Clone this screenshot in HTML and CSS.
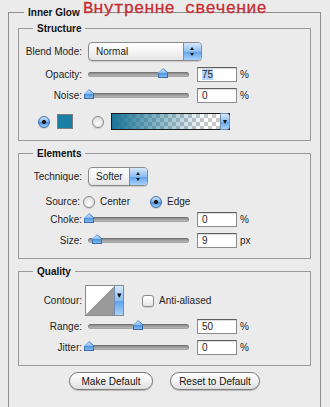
FILE: index.html
```html
<!DOCTYPE html>
<html lang="ru">
<head>
    <meta charset="UTF-8">
    <meta name="viewport" content="width=device-width, initial-scale=1.0">
    <title>Inner Glow</title>
    <link rel="stylesheet" href="styles.css">
</head>
<body>
    <div class="panel">
        <span class="note">Внутренне свечение</span>
        <fieldset class="group outer">
            <legend>Inner Glow</legend>

            <fieldset class="group">
                <legend>Structure</legend>
                <div class="row row-select">
                    <label>Blend Mode:</label>
                    <div class="select select-wide"><span>Normal</span><span class="stepper"></span></div>
                </div>
                <div class="row">
                    <label>Opacity:</label>
                    <div class="slider"><span class="thumb" style="left: 70px"></span></div>
                    <div class="num"><span class="sel">75</span></div>
                    <span class="unit">%</span>
                </div>
                <div class="row">
                    <label>Noise:</label>
                    <div class="slider"><span class="thumb" style="left: -4px"></span></div>
                    <div class="num">0</div>
                    <span class="unit">%</span>
                </div>
                <div class="row row-color">
                    <span class="radio on"></span>
                    <span class="swatch"></span>
                    <span class="radio"></span>
                    <div class="gradient"><span class="grad-btn">▾</span></div>
                </div>
            </fieldset>

            <fieldset class="group">
                <legend>Elements</legend>
                <div class="row row-select">
                    <label>Technique:</label>
                    <div class="select select-short"><span>Softer</span><span class="stepper"></span></div>
                </div>
                <div class="row row-source">
                    <label>Source:</label>
                    <span class="radio"></span><span class="opt opt-center">Center</span>
                    <span class="radio on"></span><span class="opt">Edge</span>
                </div>
                <div class="row row-tight">
                    <label>Choke:</label>
                    <div class="slider"><span class="thumb" style="left: -4px"></span></div>
                    <div class="num">0</div>
                    <span class="unit">%</span>
                </div>
                <div class="row">
                    <label>Size:</label>
                    <div class="slider"><span class="thumb" style="left: 4px"></span></div>
                    <div class="num">9</div>
                    <span class="unit">px</span>
                </div>
            </fieldset>

            <fieldset class="group">
                <legend>Quality</legend>
                <div class="row row-contour">
                    <label>Contour:</label>
                    <div class="contour"><span class="contour-btn">▾</span></div>
                    <span class="check"></span><span class="opt">Anti-aliased</span>
                </div>
                <div class="row row-tight">
                    <label>Range:</label>
                    <div class="slider"><span class="thumb" style="left: 45px"></span></div>
                    <div class="num">50</div>
                    <span class="unit">%</span>
                </div>
                <div class="row">
                    <label>Jitter:</label>
                    <div class="slider"><span class="thumb" style="left: -4px"></span></div>
                    <div class="num">0</div>
                    <span class="unit">%</span>
                </div>
            </fieldset>

            <div class="buttons">
                <button type="button" class="btn btn-make">Make Default</button>
                <button type="button" class="btn btn-reset">Reset to Default</button>
            </div>
        </fieldset>
    </div>
</body>
</html>
```

FILE: styles.css
```css
/* General Styling */
body {
    margin: 0;
    background: #ebebeb;
    font-family: 'Liberation Sans', Arial, sans-serif;
    font-size: 10px;
    color: #1e1e1e;
    overflow: hidden;
}

.panel {
    position: relative;
    height: 407px;
    padding-top: 5px;
    box-sizing: border-box;
    overflow: hidden;
}

/* red hand-written note over the top border */
.note {
    position: absolute;
    left: 83px;
    top: 0;
    font-family: 'Liberation Mono', 'Courier New', monospace;
    font-size: 17px;
    line-height: 17px;
    color: #c62d34;
    white-space: nowrap;
    -webkit-text-stroke: 0.3px #c62d34;
    z-index: 2;
}

/* Fieldsets */
.group {
    margin: 5px 0 0 0;
    padding: 6px 0 10px 0;
    border: 1px solid #9a9a9a;
    min-width: 0;
}

.group legend {
    margin-left: 14px;
    padding: 0 4px;
    line-height: 15px;
    font-weight: bold;
    color: #111;
}

.outer {
    margin: 0 0 0 8px;
    width: 313px;
    box-sizing: border-box;
    padding: 1px 9px 30px 9px;
    border-color: #8e8e8e;
}

.outer > legend {
    margin-left: 6px;
}

.outer > .group:first-of-type {
    margin-top: 0;
}

/* Rows */
.row {
    display: flex;
    align-items: center;
    height: 15px;
    margin-top: 6px;
}

.row:first-of-type {
    margin-top: 0;
}

.row label {
    width: 63px;
    flex: none;
    text-align: right;
    margin-right: 6px;
}

.row-select {
    height: 19px;
}

.row-tight {
    margin-top: 3px;
}

/* Popup menus */
.select {
    display: flex;
    align-items: center;
    height: 19px;
    box-sizing: border-box;
    border: 1px solid #8a8a8a;
    border-radius: 4px;
    background: linear-gradient(#ffffff, #f4f4f4 50%, #e4e4e4);
    box-shadow: 0 1px 1px rgba(0, 0, 0, 0.15);
    overflow: hidden;
}

.select span:first-child {
    flex: 1;
    padding-left: 7px;
}

.select-wide {
    width: 114px;
}

.select-short {
    width: 60px;
}

.stepper {
    position: relative;
    width: 17px;
    height: 100%;
    border-left: 1px solid #6f8fb8;
    background: linear-gradient(#d7e9fb, #8dbdf0 50%, #5fa0ea 51%, #a9d2fb);
}

.stepper::before,
.stepper::after {
    content: "";
    position: absolute;
    left: 6px;
    border-left: 2.5px solid transparent;
    border-right: 2.5px solid transparent;
}

.stepper::before {
    top: 4px;
    border-bottom: 3px solid #1a1a1a;
}

.stepper::after {
    bottom: 4px;
    border-top: 3px solid #1a1a1a;
}

/* Sliders */
.slider {
    position: relative;
    width: 101px;
    height: 15px;
    margin-right: 8px;
    flex: none;
}

.slider::before {
    content: "";
    position: absolute;
    left: 0;
    right: 0;
    top: 5px;
    height: 5px;
    border-radius: 3px;
    background: linear-gradient(#7c7c7c, #a9a9a9 60%, #c4c4c4);
    box-shadow: inset 0 0 0 1px rgba(0, 0, 0, 0.12);
}

.thumb {
    position: absolute;
    top: 1px;
    width: 10px;
    height: 10px;
    clip-path: polygon(50% 0, 100% 42%, 100% 100%, 0 100%, 0 42%);
    background: linear-gradient(#dff0ff, #8cc0f2 45%, #4f95e0 55%, #8fc4f5);
}

.thumb::after {
    content: "";
    position: absolute;
    inset: 0;
    clip-path: polygon(50% 0, 100% 42%, 100% 100%, 0 100%, 0 42%, 0 60%, 10% 58%, 10% 90%, 90% 90%, 90% 46%, 50% 10%, 10% 46%, 10% 58%, 0 60%);
    background: #3e6fa8;
}

/* Number fields */
.num {
    width: 40px;
    height: 15px;
    box-sizing: border-box;
    border: 1px solid #8c8c8c;
    border-top-color: #5e5e5e;
    background: #fff;
    box-shadow: inset 0 1px 1px rgba(0, 0, 0, 0.15);
    padding-left: 4px;
    line-height: 13px;
    flex: none;
}

.sel {
    background: #b5d5fe;
}

.unit {
    margin-left: 3px;
}

/* Colour row */
.row-color {
    height: 17px;
    margin-top: 10px;
    padding-left: 19px;
}

.radio {
    width: 12px;
    height: 12px;
    flex: none;
    box-sizing: border-box;
    border-radius: 50%;
    border: 1px solid #8a8a8a;
    background: radial-gradient(circle at 50% 70%, #ffffff, #e2e2e2 70%, #cfcfcf);
    box-shadow: 0 1px 1px rgba(0, 0, 0, 0.15);
}

.radio.on {
    border-color: #3f6ea6;
    background: radial-gradient(circle, #1c1c1c 0 1.8px, transparent 2.3px),
        linear-gradient(#cfe5fb, #7fb5ef 50%, #4b8fe2 55%, #9fd0fb);
}

.swatch {
    width: 16px;
    height: 15px;
    box-sizing: border-box;
    margin: 0 19px 0 7px;
    border: 1px solid #7d7d7d;
    background: #197fa4;
}

.gradient {
    position: relative;
    width: 119px;
    height: 17px;
    margin-left: 7px;
    box-sizing: border-box;
    border: 1px solid #1a1a1a;
    background:
        linear-gradient(to right, #1a7496, rgba(26, 116, 150, 0.45) 45%, rgba(26, 116, 150, 0) 80%),
        repeating-conic-gradient(#c8c8c8 0 25%, #ffffff 0 50%) 0 0 / 8px 8px;
}

.grad-btn {
    position: absolute;
    right: -1px;
    top: -1px;
    bottom: -1px;
    width: 8px;
    border: 1px solid #6f8fb8;
    border-radius: 0 3px 3px 0;
    background: linear-gradient(#d7e9fb, #8dbdf0 50%, #5fa0ea 51%, #a9d2fb);
    font-size: 8px;
    line-height: 15px;
    text-align: center;
    color: #111;
}

/* Elements */
.row-select + .row-source {
    margin-top: 8px;
}

.row-source label {
    width: 61px;
    margin-right: 3px;
}

.opt {
    margin-left: 5px;
}

.opt-center {
    margin-right: 20px;
}

/* Quality */
.row-contour {
    height: 31px;
}

.contour {
    position: relative;
    width: 39px;
    height: 31px;
    margin-left: -3px;
    box-sizing: border-box;
    border: 1px solid #8a8a8a;
    background: linear-gradient(to bottom right, #ffffff 50%, #9a9a9a 50%) 0 0 / 29px 100% no-repeat, #9a9a9a;
}

.contour-btn {
    position: absolute;
    right: 0;
    top: 0;
    bottom: 0;
    width: 8px;
    border-left: 1px solid #6f8fb8;
    background: linear-gradient(#d7e9fb, #8dbdf0 50%, #5fa0ea 51%, #a9d2fb);
    font-size: 9px;
    line-height: 18px;
    text-align: center;
    color: #111;
}

.check {
    width: 12px;
    height: 12px;
    margin-left: 18px;
    box-sizing: border-box;
    border: 1px solid #8a8a8a;
    border-radius: 3px;
    background: linear-gradient(#ffffff, #e6e6e6);
    box-shadow: 0 1px 1px rgba(0, 0, 0, 0.12);
}

/* Buttons */
.buttons {
    display: flex;
    justify-content: center;
    gap: 17px;
    margin-top: 6px;
}

.btn {
    height: 18px;
    padding: 0;
    border: 1px solid #7a7a7a;
    border-radius: 9px;
    background: linear-gradient(#ffffff, #f2f2f2 50%, #dedede);
    box-shadow: 0 1px 1px rgba(0, 0, 0, 0.2);
    font-family: 'Liberation Sans', Arial, sans-serif;
    font-size: 10px;
    color: #111;
}

.btn-make {
    width: 84px;
}

.btn-reset {
    width: 90px;
}
```
